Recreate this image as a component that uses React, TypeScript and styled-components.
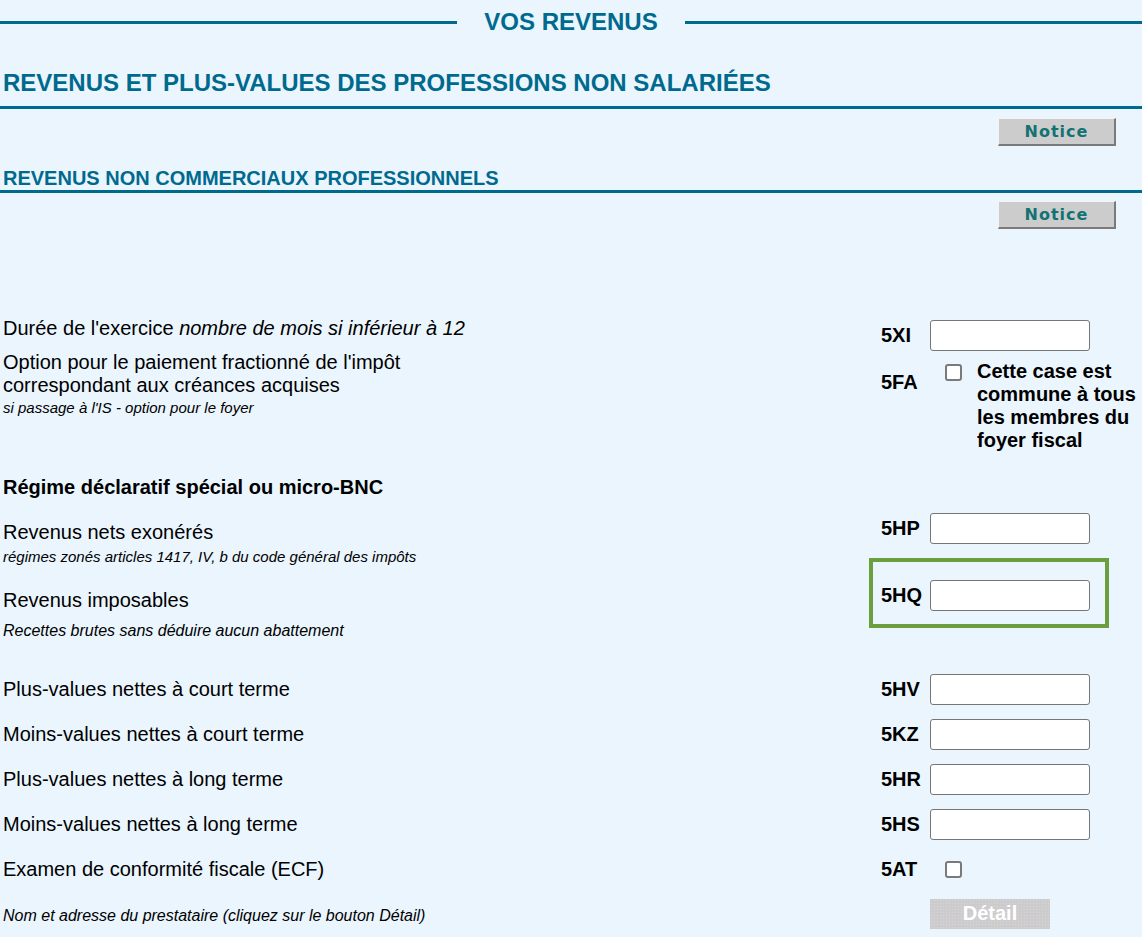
import styled, { createGlobalStyle } from "styled-components";

const GlobalStyle = createGlobalStyle`
  html, body {
    margin: 0;
    padding: 0;
    background: #eaf5fe;
  }
  body {
    font-family: "Liberation Sans", Arial, sans-serif;
    color: #000;
  }
`;

const TEAL = "#006a8e";

const Page = styled.div`
  width: 1142px;
  min-height: 937px;
  background: #eaf5fe;
  padding-top: 7px;
  padding-bottom: 12px;
  box-sizing: border-box;
`;

const TitleBar = styled.div`
  display: flex;
  align-items: center;
  gap: 27px;
  padding-top: 1px;
`;

const TitleLine = styled.div`
  flex: 1;
  height: 3px;
  background: ${TEAL};
`;

const PageTitle = styled.h1`
  margin: 0;
  font-size: 24px;
  line-height: 28px;
  font-weight: bold;
  color: ${TEAL};
`;

const SectionTitle = styled.h2`
  margin: 33px 0 0;
  padding: 0 0 9px 3px;
  font-size: 24px;
  line-height: 28px;
  font-weight: bold;
  color: ${TEAL};
  border-bottom: 3px solid ${TEAL};
`;

const SubSectionTitle = styled.h3`
  margin: 21px 0 0;
  padding: 0 0 0 3px;
  font-size: 20px;
  line-height: 23px;
  font-weight: bold;
  color: ${TEAL};
  border-bottom: 3px solid ${TEAL};
`;

const NoticeRow = styled.div<{ $top: number }>`
  display: flex;
  justify-content: flex-end;
  padding-right: 26px;
  margin-top: ${(p) => p.$top}px;
`;

const NoticeButton = styled.button`
  width: 118px;
  height: 28px;
  padding: 0;
  background: #cccccc;
  border-style: solid;
  border-width: 1px 2px 2px 1px;
  border-color: #f4f4f4 #7a7a7a #7a7a7a #f4f4f4;
  font-family: "DejaVu Sans", Verdana, sans-serif;
  font-weight: bold;
  font-size: 16px;
  letter-spacing: 1px;
  color: #127274;
  cursor: pointer;
`;

const Form = styled.div`
  display: flex;
  flex-direction: column;
  padding-left: 3px;
`;

const Row = styled.div<{ $top: number }>`
  display: grid;
  grid-template-columns: 878px 1fr;
  align-items: start;
  margin-top: ${(p) => p.$top}px;
`;

const LabelCell = styled.div<{ $pad?: number }>`
  padding-top: ${(p) => p.$pad ?? 4}px;
  font-size: 20px;
  line-height: 23px;
`;

const Note = styled.div<{ $top?: number; $big?: boolean }>`
  margin-top: ${(p) => p.$top ?? 0}px;
  font-size: ${(p) => (p.$big ? 16 : 15)}px;
  line-height: ${(p) => (p.$big ? 18 : 17)}px;
  font-style: italic;
`;

const GroupTitle = styled.div`
  margin-top: 24px;
  font-size: 20px;
  line-height: 23px;
  font-weight: bold;
`;

const Entry = styled.div<{ $top?: number; $start?: boolean }>`
  position: relative;
  display: flex;
  align-items: ${(p) => (p.$start ? "flex-start" : "center")};
  min-height: 31px;
  margin-top: ${(p) => p.$top ?? 0}px;
`;

const Code = styled.div<{ $pad?: number }>`
  width: 49px;
  flex-shrink: 0;
  padding-top: ${(p) => p.$pad ?? 0}px;
  font-size: 20px;
  line-height: 23px;
  font-weight: bold;
`;

const TextField = styled.input`
  width: 160px;
  height: 31px;
  box-sizing: border-box;
  border: 1px solid #767676;
  border-radius: 3px;
  background: #fff;
  padding: 0 6px;
  font-family: "Liberation Sans", Arial, sans-serif;
  font-size: 18px;
`;

const Check = styled.input<{ $top?: number }>`
  appearance: none;
  width: 17px;
  height: 17px;
  margin: ${(p) => p.$top ?? 0}px 0 0 15px;
  box-sizing: border-box;
  border: 2px solid #7a7a7a;
  border-radius: 3px;
  background: #fff;
  flex-shrink: 0;
`;

const CheckNote = styled.div`
  flex: 1;
  margin: 9px 0 0 15px;
  font-size: 20px;
  line-height: 23px;
  font-weight: bold;
`;

const Highlight = styled.div`
  position: absolute;
  left: -12px;
  top: -22px;
  width: 240px;
  height: 70px;
  box-sizing: border-box;
  border: 4px solid #6c9e3d;
  pointer-events: none;
`;

const DetailButton = styled.button`
  width: 120px;
  height: 30px;
  padding: 0;
  border: none;
  background-color: #cccccc;
  background-image: radial-gradient(#ddd3dd 0.6px, transparent 0.8px);
  background-size: 3px 3px;
  font-family: "Liberation Sans", Arial, sans-serif;
  font-size: 20px;
  font-weight: bold;
  color: #fff;
`;

type Line = { code: string; label: string };

const gains: Line[] = [
  { code: "5HV", label: "Plus-values nettes à court terme" },
  { code: "5KZ", label: "Moins-values nettes à court terme" },
  { code: "5HR", label: "Plus-values nettes à long terme" },
  { code: "5HS", label: "Moins-values nettes à long terme" },
];

export default function App() {
  return (
    <>
      <GlobalStyle />
      <Page>
        <TitleBar>
          <TitleLine />
          <PageTitle>VOS REVENUS</PageTitle>
          <TitleLine />
        </TitleBar>

        <SectionTitle>REVENUS ET PLUS-VALUES DES PROFESSIONS NON SALARIÉES</SectionTitle>
        <NoticeRow $top={9}>
          <NoticeButton>Notice</NoticeButton>
        </NoticeRow>

        <SubSectionTitle>REVENUS NON COMMERCIAUX PROFESSIONNELS</SubSectionTitle>
        <NoticeRow $top={8}>
          <NoticeButton>Notice</NoticeButton>
        </NoticeRow>

        <Form>
          <Row $top={88}>
            <LabelCell $pad={0}>
              Durée de l'exercice <i>nombre de mois si inférieur à 12</i>
            </LabelCell>
            <Entry $top={3}>
              <Code>5XI</Code>
              <TextField />
            </Entry>
          </Row>

          <Row $top={0}>
            <LabelCell $pad={0}>
              Option pour le paiement fractionné de l'impôt
              <br />
              correspondant aux créances acquises
              <Note $top={2}>si passage à l'IS - option pour le foyer</Note>
            </LabelCell>
            <Entry $start>
              <Code $pad={20}>5FA</Code>
              <Check type="checkbox" $top={13} />
              <CheckNote>Cette case est commune à tous les membres du foyer fiscal</CheckNote>
            </Entry>
          </Row>

          <GroupTitle>Régime déclaratif spécial ou micro-BNC</GroupTitle>

          <Row $top={14}>
            <LabelCell $pad={8}>
              Revenus nets exonérés
              <Note $top={4}>régimes zonés articles 1417, IV, b du code général des impôts</Note>
            </LabelCell>
            <Entry>
              <Code>5HP</Code>
              <TextField />
            </Entry>
          </Row>

          <Row $top={15}>
            <LabelCell $pad={9}>
              Revenus imposables
              <Note $top={10} $big>
                Recettes brutes sans déduire aucun abattement
              </Note>
            </LabelCell>
            <Entry>
              <Highlight />
              <Code>5HQ</Code>
              <TextField />
            </Entry>
          </Row>

          {gains.map((g, i) => (
            <Row key={g.code} $top={i === 0 ? 34 : 14}>
              <LabelCell>{g.label}</LabelCell>
              <Entry>
                <Code>{g.code}</Code>
                <TextField />
              </Entry>
            </Row>
          ))}

          <Row $top={14}>
            <LabelCell>Examen de conformité fiscale (ECF)</LabelCell>
            <Entry>
              <Code>5AT</Code>
              <Check type="checkbox" />
            </Entry>
          </Row>

          <Row $top={13}>
            <LabelCell $pad={9}>
              <Note $big>Nom et adresse du prestataire (cliquez sur le bouton Détail)</Note>
            </LabelCell>
            <Entry>
              <Code />
              <DetailButton disabled>Détail</DetailButton>
            </Entry>
          </Row>
        </Form>
      </Page>
    </>
  );
}
